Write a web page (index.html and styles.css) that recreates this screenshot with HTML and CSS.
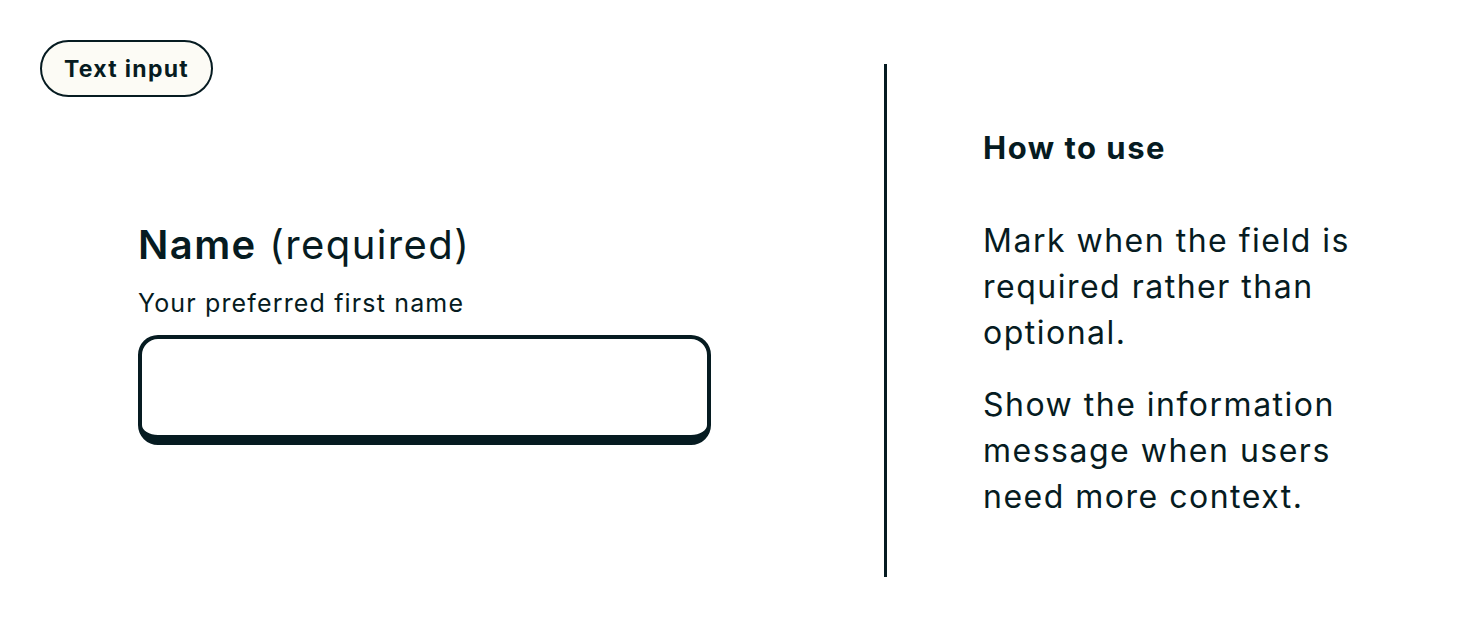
FILE: index.html
```html
<!DOCTYPE html>
<html lang="en">
<head>
<meta charset="utf-8">
<title>Text input</title>
<link rel="stylesheet" href="styles.css">
</head>
<body>
<main class="page">
  <section class="demo">
    <span class="badge">Text input</span>
    <div class="field">
      <label class="label" for="name"><span class="label-main">Name</span> (required)</label>
      <p class="hint">Your preferred first name</p>
      <input class="input" id="name" type="text">
    </div>
  </section>
  <div class="divider"></div>
  <section class="guide">
    <h2 class="guide-title">How to use</h2>
    <p class="guide-text">Mark when the field is required rather than optional.</p>
    <p class="guide-text">Show the information message when users need more context.</p>
  </section>
</main>
</body>
</html>
```
FILE: styles.css
```css
* { box-sizing: border-box; }
html, body { margin: 0; padding: 0; background: #ffffff; }
body {
  font-family: Inter, "Noto Sans", sans-serif;
  color: #061b21;
  width: 1472px;
  height: 641px;
  overflow: hidden;
}
.page {
  display: flex;
  align-items: flex-start;
  height: 641px;
}
.demo {
  width: 884px;
  padding: 40px 0 0 40px;
  display: flex;
  flex-direction: column;
  align-items: flex-start;
}
.badge {
  display: inline-flex;
  align-items: center;
  justify-content: center;
  height: 57px;
  width: 173px;
  border: 2px solid #061b21;
  border-radius: 29px;
  background: #fcfbf5;
  font-size: 23px;
  font-weight: 700;
  letter-spacing: 1.3px;
}
.field {
  margin: 124px 0 0 98px;
  width: 573px;
  display: flex;
  flex-direction: column;
}
.label {
  font-size: 40px;
  line-height: 48px;
  font-weight: 400;
  letter-spacing: 1.4px;
}
.label-main { font-weight: 600; }
.hint {
  margin: 19px 0 0 0;
  font-size: 25px;
  line-height: 30px;
  letter-spacing: 1.15px;
}
.input {
  margin-top: 17px;
  width: 573px;
  height: 110px;
  border: 4px solid #061b21;
  border-bottom-width: 10px;
  border-radius: 20px;
  background: #fff;
  outline: none;
  font: inherit;
}
.divider {
  width: 3px;
  height: 513px;
  margin-top: 64px;
  background: #061b21;
}
.guide {
  padding: 128px 0 0 96px;
  width: 480px;
}
.guide-title {
  margin: 0;
  font-size: 31px;
  line-height: 40px;
  font-weight: 700;
  letter-spacing: 1.5px;
}
.guide-text {
  margin: 50px 0 0 0;
  font-size: 32px;
  line-height: 46px;
  letter-spacing: 1.5px;
  width: 400px;
}
.guide-text + .guide-text { margin-top: 26px; }
```
